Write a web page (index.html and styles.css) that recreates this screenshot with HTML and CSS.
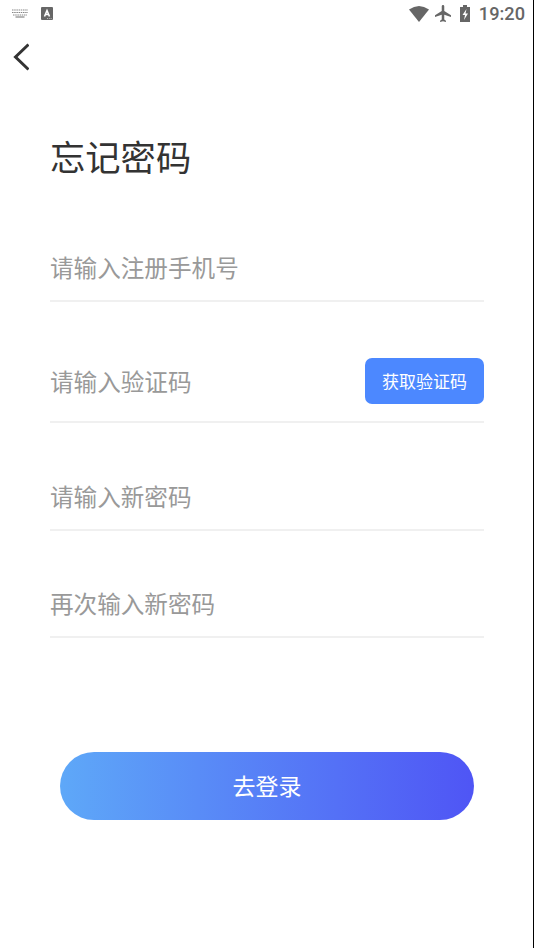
FILE: index.html
```html
<!DOCTYPE html>
<html lang="zh-CN">
<head>
<meta charset="utf-8">
<title>忘记密码</title>
<link rel="stylesheet" href="styles.css">
</head>
<body>
<div class="screen">
  <header class="status">
    <div class="status-left">
      <svg width="16" height="9" viewBox="0 0 16 9" fill="none" stroke="#858585"><path d="M0 1h16M0 3.500h16M1 6h14" stroke-dasharray="1.500 .7" stroke-width="1.100"/><path d="M3.500 8h9" stroke-width="1.200"/></svg>
      <svg width="12" height="13" viewBox="0 0 12 13"><rect width="12" height="13" rx="1" fill="#666"/><path d="M3.500 9.500 6 3.500l2.500 6M4.500 7.500h3" fill="none" stroke="#fff" stroke-width="1.600"/><path d="M6 11.500h5" stroke="#ccc" stroke-width=".8" stroke-dasharray="1 .8"/></svg>
    </div>
    <div class="status-right">
      <svg class="wifi" width="20" height="16" viewBox="0 0 20 16"><path d="M0 3.500Q10-3.500 20 3.500L10 16z" fill="#666"/></svg>
      <svg class="plane" width="16" height="17" viewBox="2 2 19 20" preserveAspectRatio="none"><path d="M21 16v-2l-8-5V3.500a1.500 1.500 0 0 0-3 0V9l-8 5v2l8-2.500V19l-2 1.500V22l3.500-1 3.500 1v-1.500L13 19v-5.500z" fill="#666"/></svg>
      <svg class="battery" width="10" height="17" viewBox="0 0 10 17"><path d="M3 0h4v2h3v15H0V2h3z" fill="#666"/><path d="M6.500 4 2.500 10H5l-1 5 4-6.500H5.500z" fill="#fff"/></svg>
      <span class="time">19:20</span>
    </div>
  </header>
  <nav class="nav"><svg width="16" height="28" viewBox="0 0 16 28"><path d="M15.500 1.500 2.500 14l13 12.500" fill="none" stroke="#333" stroke-width="3"/></svg></nav>
  <main class="form">
    <h1 class="title">忘记密码</h1>
    <div class="field phone">请输入注册手机号</div>
    <div class="field code"><span>请输入验证码</span><button class="get-code">获取验证码</button></div>
    <div class="field">请输入新密码</div>
    <div class="field">再次输入新密码</div>
    <button class="submit">去登录</button>
  </main>
</div>
</body>
</html>
```
FILE: styles.css
```css
* { box-sizing: border-box; }
body { margin: 0; background: #fff; font-family: Roboto, "Noto Sans CJK SC", sans-serif; }
button { border: 0; padding: 0; color: #fff; font-family: inherit; }
svg { display: block; }
.screen { width: 534px; height: 948px; border-right: 1px solid #000; overflow: hidden; }
.status { height: 27px; display: flex; justify-content: space-between; padding: 0 8px 0 12px; }
.status-left, .status-right { display: flex; align-items: center; }
.status-left { gap: 13px; }
.wifi { margin-right: 6px; }
.plane { margin-right: 9px; }
.battery { margin-right: 9px; }
.time { font-size: 18.200px; font-weight: 500; color: #666; line-height: 27px; }
.nav { height: 60px; padding: 16px 0 0 13px; }
.form { padding: 0 49px 0 50px; }
.title { margin: 45px 0 0; height: 54px; font-size: 35.300px; line-height: 54px; font-weight: 400; color: #333; }
.field { display: flex; align-items: center; justify-content: space-between; height: 107px; padding-top: 39px; border-bottom: 2px solid #f0f0f0; font-size: 23.600px; color: #999; }
.phone { margin-top: 9px; }
.field.code { height: 121px; padding-top: 39px; }
.field.code + .field { height: 108px; padding-top: 40px; }
.get-code { width: 119px; height: 46px; margin-top: -1px; border-radius: 7px; background: #4c88ff; font-size: 17px; }
.submit { display: block; width: 414px; height: 68px; margin: 114px 0 0 10px; padding-bottom: 2px; border-radius: 34px; background: linear-gradient(90deg, #5ea8f8, #4f55f5); font-size: 23px; }
```
